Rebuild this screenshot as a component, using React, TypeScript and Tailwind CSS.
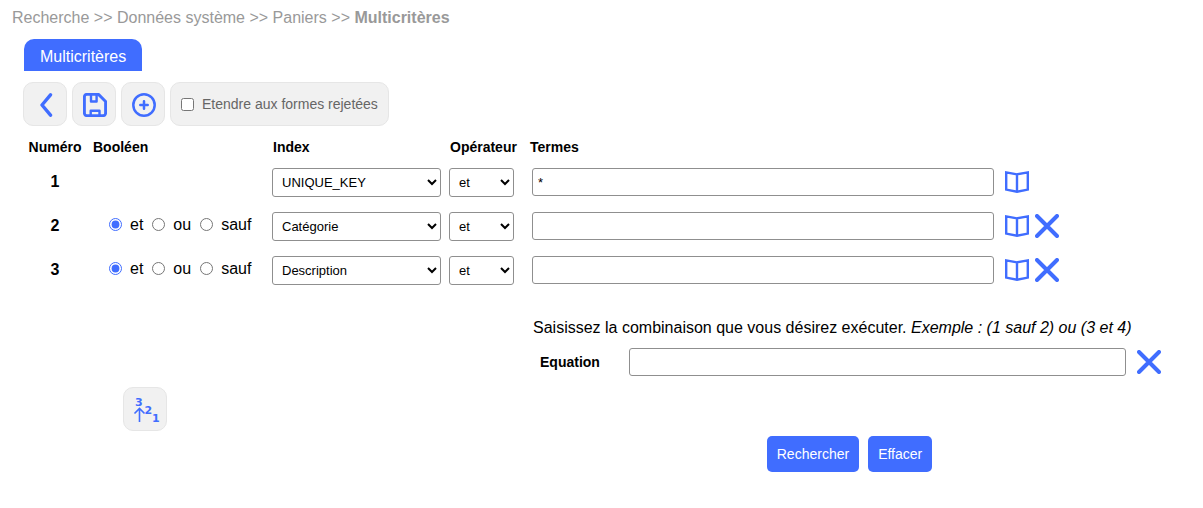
import type { ReactNode } from "react";

const toolButton =
  "flex h-11 w-11 shrink-0 cursor-pointer items-center justify-center rounded-[10px] border border-[#e6e6e6] bg-[#f1f1f1] pt-0.5 pl-0.5 text-[#406dff]";
const textField =
  "h-7 w-full min-w-0 rounded-[3px] border border-[#8f8f8f] bg-white px-[5px] text-[13px] outline-none focus:border-[#406dff]";
const selectField =
  "h-[29px] rounded-[3px] border border-[#8f8f8f] bg-white px-[5px] text-[13px]";

function ChevronIcon() {
  return (
    <svg className="h-6 w-6" viewBox="0 0 24 24" fill="none" stroke="currentColor" strokeWidth="3.4" strokeLinecap="round" strokeLinejoin="round" aria-hidden="true">
      <path d="M16.5 1.900 8 12l8.500 10.100" />
    </svg>
  );
}

function SaveIcon() {
  return (
    <svg className="h-6 w-6" viewBox="0 0 24 24" fill="none" stroke="currentColor" strokeWidth="2.9" strokeLinejoin="round" aria-hidden="true">
      <path d="M3.800 1.400H15.500L22.600 8.500V20.200a2.400 2.400 0 0 1-2.400 2.400H3.800a2.400 2.400 0 0 1-2.400-2.400V3.800a2.400 2.400 0 0 1 2.400-2.400Z" />
      <path d="M8 1.400V8.500h5.600V1.400" strokeWidth="2.400" />
      <path d="M7.700 22.500V17.700h8.800v4.800" strokeWidth="2.400" />
    </svg>
  );
}

function PlusCircleIcon() {
  return (
    <svg className="h-6 w-6" viewBox="0 0 24 24" fill="none" stroke="currentColor" strokeWidth="2.500" strokeLinecap="round" aria-hidden="true">
      <circle cx="12" cy="12" r="10.700" />
      <path d="M12 8.300v7.400M8.300 12h7.400" />
    </svg>
  );
}

function BookIcon() {
  return (
    <svg className="h-6 w-6" viewBox="0 0 24 24" fill="none" stroke="currentColor" strokeWidth="2.400" aria-hidden="true">
      <path d="M12 4.400 1.200 2.400v17.200L12 21.800l10.800-2.200V2.400L12 4.400v17.400" />
    </svg>
  );
}

function CrossIcon() {
  return (
    <svg className="h-6 w-6" viewBox="0 0 24 24" fill="none" stroke="currentColor" strokeWidth="4" strokeLinecap="round" aria-hidden="true">
      <path d="M2 2l20 20M22 2 2 22" />
    </svg>
  );
}

function RenumberIcon() {
  return (
    <svg className="h-7 w-7 overflow-visible" viewBox="0 0 28 28" fill="none" stroke="currentColor" strokeWidth="1.600" aria-hidden="true">
      <path d="M7.500 26V12.500M2.500 17.500l5-5 5 5" />
      <g fill="currentColor" stroke="none" fontFamily="DejaVu Sans, Arial, sans-serif" fontWeight="700" fontSize="11">
        <text x="3" y="10">3</text>
        <text x="12.500" y="18">2</text>
        <text x="20" y="26">1</text>
      </g>
    </svg>
  );
}

function IconButton({ label, children }: { label: string; children: ReactNode }) {
  return (
    <button type="button" aria-label={label} className="shrink-0 cursor-pointer text-[#406dff]">
      {children}
    </button>
  );
}

const indexes = ["UNIQUE_KEY", "Catégorie", "Description"];
const operators = ["et", "ou", "sauf"];

function CriterionRow({ number, index, term }: { number: number; index: string; term: string }) {
  const first = number === 1;
  return (
    <tr className="h-11">
      <th scope="row" className="text-center text-base font-bold">{number}</th>
      <td>
        {!first && (
          <div className="flex items-center gap-[9px] pb-0.5 pl-[23px]">
            {operators.map((op) => (
              <label key={op} className="flex items-center gap-2">
                <input type="radio" name={`bool-${number}`} defaultChecked={op === "et"} className="mb-0.5 h-[13px] w-[13px] accent-[#406dff]" />
                {op}
              </label>
            ))}
          </div>
        )}
      </td>
      <td>
        <select aria-label={`Index ${number}`} defaultValue={index} className={`${selectField} w-[169px]`}>
          {indexes.map((name) => <option key={name}>{name}</option>)}
        </select>
      </td>
      <td>
        <select aria-label={`Opérateur ${number}`} className={`${selectField} w-[65px]`}>
          {operators.map((op) => <option key={op}>{op}</option>)}
        </select>
      </td>
      <td>
        <div className="flex items-center pl-0.5">
          <input type="text" aria-label={`Termes ${number}`} defaultValue={term} className={textField} />
          <div className="ml-[11px] flex w-[55px] shrink-0 items-center gap-1.5">
            <IconButton label="Ouvrir l'index"><BookIcon /></IconButton>
            {!first && <IconButton label="Supprimer la ligne"><CrossIcon /></IconButton>}
          </div>
        </div>
      </td>
    </tr>
  );
}

export default function App() {
  return (
    <main className="bg-white pb-9 font-['Liberation_Sans',Arial,sans-serif] text-base text-black">
      <nav aria-label="Fil d'Ariane" className="px-3 pt-1.5 leading-6 text-[#999]">
        Recherche &gt;&gt; Données système &gt;&gt; Paniers &gt;&gt; <b>Multicritères</b>
      </nav>

      <div className="mt-[9px] flex pl-6">
        <h1 className="flex h-8 items-center rounded-t-[10px] bg-[#406dff] px-4 pt-1 text-white">Multicritères</h1>
      </div>

      <div className="mt-[11px] flex gap-[5px] pl-[23px]">
        <button type="button" aria-label="Retour" className={toolButton}><ChevronIcon /></button>
        <button type="button" aria-label="Enregistrer" className={toolButton}><SaveIcon /></button>
        <button type="button" aria-label="Ajouter" className={toolButton}><PlusCircleIcon /></button>
        <label className="flex h-11 items-center gap-2 rounded-[10px] border border-[#e6e6e6] bg-[#f1f1f1] px-2.5 text-sm text-[#666]">
          <input type="checkbox" className="h-[13px] w-[13px] accent-[#406dff]" />
          Etendre aux formes rejetées
        </label>
      </div>

      <div className="mt-2 pr-[143px] pl-6">
        <table className="w-full table-fixed border-collapse">
          <colgroup>
            <col className="w-[62px]" />
            <col className="w-[186px]" />
            <col className="w-[177px]" />
            <col className="w-[81px]" />
            <col />
          </colgroup>
          <thead>
            <tr className="h-[26px] text-left text-sm">
              <th scope="col" className="text-center">Numéro</th>
              <th scope="col" className="pl-[7px]">Booléen</th>
              <th scope="col" className="pl-px">Index</th>
              <th scope="col" className="pl-px">Opérateur</th>
              <th scope="col">Termes</th>
            </tr>
          </thead>
          <tbody>
            <CriterionRow number={1} index="UNIQUE_KEY" term="*" />
            <CriterionRow number={2} index="Catégorie" term="" />
            <CriterionRow number={3} index="Description" term="" />
          </tbody>
        </table>
      </div>

      <section className="mt-6 pr-[42px] pl-[533px]">
        <p className="leading-6">
          Saisissez la combinaison que vous désirez exécuter. <i>Exemple : (1 sauf 2) ou (3 et 4)</i>
        </p>
        <div className="mt-2 flex items-center pl-[7px]">
          <label htmlFor="equation" className="w-[89px] shrink-0 text-sm font-bold">Equation</label>
          <input id="equation" type="text" className={`${textField} mr-[11px]`} />
          <IconButton label="Effacer l'équation"><CrossIcon /></IconButton>
        </div>
      </section>

      <div className="mt-[11px] pl-[123px]">
        <button type="button" aria-label="Renuméroter" className={toolButton}><RenumberIcon /></button>
      </div>

      <div className="mt-[5px] flex justify-center gap-[9px] pl-[496px] text-sm text-white">
        <button type="button" className="h-9 cursor-pointer rounded-[5px] bg-[#406dff] px-2.5">Rechercher</button>
        <button type="button" className="h-9 cursor-pointer rounded-[5px] bg-[#406dff] px-2.5">Effacer</button>
      </div>
    </main>
  );
}
